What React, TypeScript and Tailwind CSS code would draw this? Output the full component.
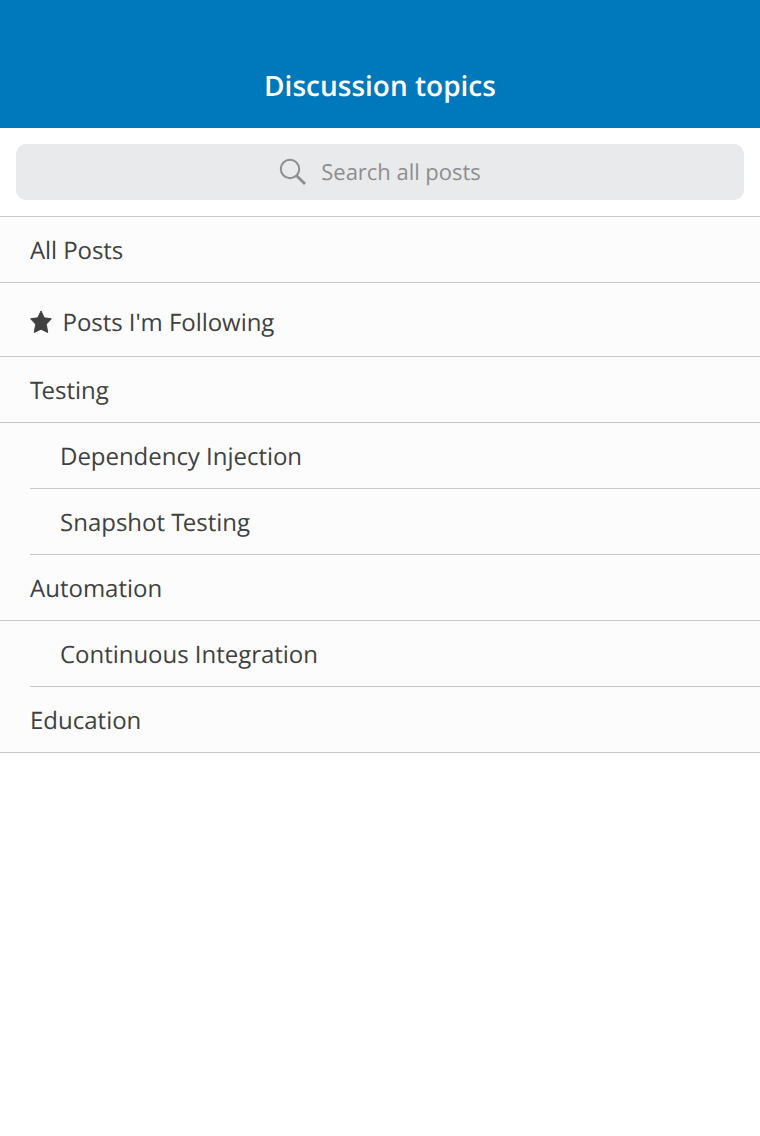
const rows = [
  { label: 'All Posts', row: 'h-[66px]', text: 'pl-[30px] pt-0.5 tracking-[-0.07px]', line: 'ml-0' },
  { label: "Posts I'm Following", row: 'h-[74px]', text: 'pl-[30px] pt-1 tracking-[-0.05px]', line: 'ml-0', star: true },
  { label: 'Testing', row: 'h-[66px]', text: 'pl-[30px] pt-0.5', line: 'ml-0' },
  { label: 'Dependency Injection', row: 'h-[66px]', text: 'pl-[60px] pt-0.5 tracking-[-0.03px]', line: 'ml-[30px]' },
  { label: 'Snapshot Testing', row: 'h-[66px]', text: 'pl-[60px] pt-0.5', line: 'ml-[30px]' },
  { label: 'Automation', row: 'h-[66px]', text: 'pl-[30px] pt-0.5', line: 'ml-0' },
  { label: 'Continuous Integration', row: 'h-[66px]', text: 'pl-[60px] pt-0.5 tracking-[-0.03px]', line: 'ml-[30px]' },
  { label: 'Education', row: 'h-[66px]', text: 'pl-[30px] pt-0.5', line: 'ml-0' },
];

function Star() {
  return (
    <svg className="mr-[10.5px] h-6 w-[22px]" viewBox="0 0 22 24" fill="#414141" stroke="#414141" strokeWidth="1" strokeLinejoin="round">
      <path d="M11 1L14.2 7.8L21.4 8.8L16.3 14.2L17.7 22.5L11 19.2L4.3 22.5L5.7 14.2L0.6 8.8L7.8 7.8Z" />
    </svg>
  );
}

// Tightens the gap between a capital T and the lowercase letter after it.
function Label({ text }: { text: string }) {
  const at = text.indexOf('Te');
  if (at < 0) return <span>{text}</span>;
  return (
    <span>
      {text.slice(0, at)}
      <span className="tracking-[-1.7px]">T</span>
      {text.slice(at + 1)}
    </span>
  );
}

export default function App() {
  return (
    <div className="min-h-[1136px] w-full bg-white font-['Open_Sans',sans-serif] antialiased [font-kerning:normal] [text-rendering:geometricPrecision]">
      <header className="flex h-32 items-end justify-center bg-[#0079bc] pb-[22px]">
        <h1 className="text-[28px] leading-10 font-semibold text-white">Discussion topics</h1>
      </header>
      <div className="h-[88px] p-4">
        <div className="flex h-14 items-center justify-center rounded-[10px] bg-[#e9eaeb] text-[#8e8e8f]">
          <svg className="mr-[14px] h-7 w-7" viewBox="0 0 28 28" fill="none" stroke="#8e8e8f" strokeWidth="2">
            <circle cx="11" cy="11" r="9.2" />
            <path d="M17.4 17.4L26 26" strokeWidth="2.8" />
          </svg>
          <span className="text-[22px] leading-[30px] tracking-[-0.04px]">Search all posts</span>
        </div>
      </div>
      <ul className="border-t border-[#c8c8c8] bg-[#fcfcfc]">
        {rows.map((r) => (
          <li key={r.label} className={`flex flex-col ${r.row}`}>
            <div className={`flex flex-1 items-center text-2xl text-[#414141] ${r.text}`}>
              {r.star && <Star />}
              <span className={r.star ? 'pt-0.5' : ''}>
                <Label text={r.label} />
              </span>
            </div>
            <div className={`h-px bg-[#c8c8c8] ${r.line}`} />
          </li>
        ))}
      </ul>
    </div>
  );
}
